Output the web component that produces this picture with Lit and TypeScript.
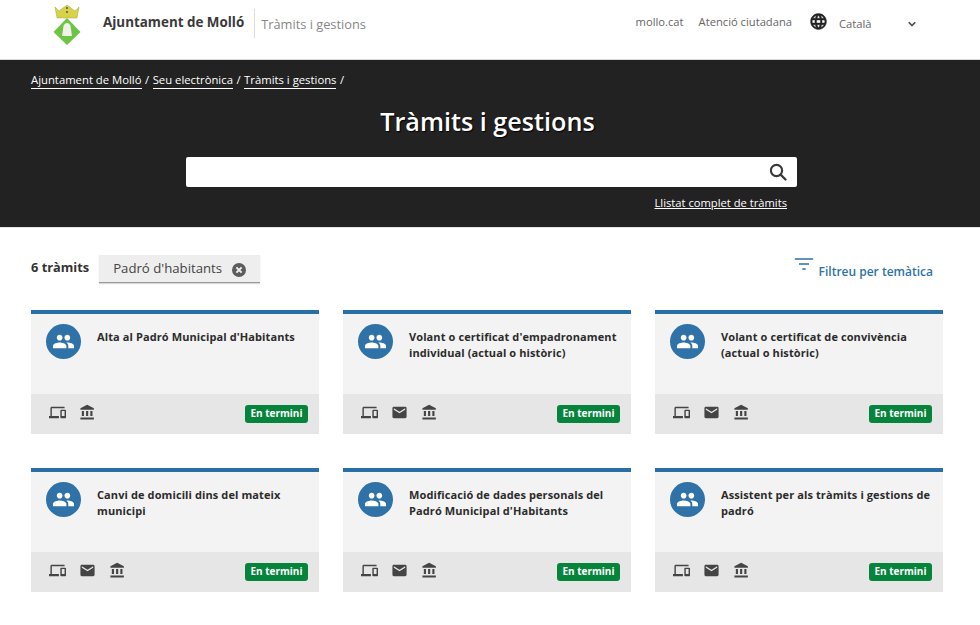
import { LitElement, css, html, svg } from 'lit'
import { customElement } from 'lit/decorators.js'

const icon = (d: unknown, size: number, cls = '') =>
  html`<svg class=${cls} width=${size} height=${size} viewBox="0 0 24 24" fill="currentColor">${d}</svg>`

const people = svg`<path d="M16 11c1.66 0 2.99-1.34 2.99-3S17.66 5 16 5s-3 1.34-3 3 1.34 3 3 3zm-8 0c1.66 0 2.99-1.34 2.99-3S9.66 5 8 5 5 6.34 5 8s1.34 3 3 3zm0 2c-2.33 0-7 1.17-7 3.5V19h14v-2.5C15 14.17 10.33 13 8 13zm8 0c-.29 0-.62.02-.97.05 1.16.84 1.97 1.97 1.97 3.45V19h6v-2.5c0-2.33-4.67-3.5-7-3.5z"/>`
const devices = svg`<path d="M4 6h18V4H4c-1.1 0-2 .9-2 2v11H0v3h14v-3H4V6zm19 2h-6c-.55 0-1 .45-1 1v10c0 .55.45 1 1 1h6c.55 0 1-.45 1-1V9c0-.55-.45-1-1-1zm-1 9h-4v-7h4v7z"/>`
const mail = svg`<path d="M20 4H4c-1.1 0-2 .9-2 2v12c0 1.1.9 2 2 2h16c1.1 0 2-.9 2-2V6c0-1.1-.9-2-2-2zm0 4-8 5-8-5V6l8 5 8-5v2z"/>`
const bank = svg`<path d="M4 10v7h3v-7H4zm6 0v7h3v-7h-3zM2 22h19v-3H2v3zm14-12v7h3v-7h-3zm-4.500-9L2 6v2h19V6l-9.500-5z"/>`
const globe = svg`<path stroke="currentColor" stroke-width=".6" d="M11.990 2C6.470 2 2 6.480 2 12s4.470 10 9.990 10C17.520 22 22 17.520 22 12S17.520 2 11.990 2zm6.930 6h-2.950c-.32-1.250-.78-2.450-1.380-3.560 1.840.63 3.370 1.910 4.330 3.560zM12 4.040c.83 1.200 1.480 2.530 1.910 3.960h-3.820c.43-1.430 1.080-2.760 1.910-3.960zM4.260 14C4.100 13.360 4 12.690 4 12s.1-1.360.26-2h3.380c-.08.660-.14 1.320-.14 2s.06 1.340.14 2H4.260zm.82 2h2.950c.32 1.250.78 2.450 1.380 3.560-1.840-.63-3.370-1.900-4.330-3.560zm2.950-8H5.080c.96-1.660 2.490-2.930 4.330-3.560C8.810 5.550 8.350 6.750 8.030 8zM12 19.960c-.83-1.200-1.480-2.530-1.910-3.960h3.820c-.43 1.430-1.080 2.760-1.910 3.960zM14.340 14H9.660c-.09-.66-.16-1.320-.16-2s.07-1.350.16-2h4.680c.09.650.16 1.320.16 2s-.07 1.340-.16 2zm.25 5.560c.6-1.110 1.060-2.310 1.380-3.560h2.950c-.96 1.650-2.490 2.930-4.330 3.560zM16.360 14c.08-.66.14-1.320.14-2s-.06-1.340-.14-2h3.380c.16.640.26 1.310.26 2s-.1 1.360-.26 2h-3.380z"/>`
const search = svg`<circle cx="10" cy="10" r="7.500" fill="none" stroke="currentColor" stroke-width="2.800"/><path d="M15.500 15.500L22 22" fill="none" stroke="currentColor" stroke-width="3" stroke-linecap="round"/>`
const cancel = svg`<circle cx="12" cy="12" r="12"/><path d="M7.500 7.500l9 9M16.500 7.500l-9 9" fill="none" stroke="#eee" stroke-width="3.600"/>`
const chevron = svg`<path stroke="currentColor" stroke-width=".8" d="M16.590 8.590 12 13.170 7.410 8.590 6 10l6 6 6-6z"/>`
const filter = svg`<path d="M1 5h22v2H1zM6 11h12v2H6zM10 17h4v2h-4z"/>`

type Channel = 'devices' | 'mail' | 'bank'
const channelIcons = { devices, mail, bank }

const tramits: { title: string; channels: Channel[] }[] = [
  { title: "Alta al Padró Municipal d'Habitants", channels: ['devices', 'bank'] },
  { title: "Volant o certificat d'empadronament individual (actual o històric)", channels: ['devices', 'mail', 'bank'] },
  { title: 'Volant o certificat de convivència (actual o històric)', channels: ['devices', 'mail', 'bank'] },
  { title: 'Canvi de domicili dins del mateix municipi', channels: ['devices', 'mail', 'bank'] },
  { title: "Modificació de dades personals del Padró Municipal d'Habitants", channels: ['devices', 'mail', 'bank'] },
  { title: 'Assistent per als tràmits i gestions de padró', channels: ['devices', 'mail', 'bank'] },
]

@customElement('app-root')
export class AppRoot extends LitElement {
  static styles = css`
    :host {
      display: block;
      width: 980px;
      height: 625px;
      overflow: hidden;
      background: #fff;
      font-family: "Open Sans", "Liberation Sans", sans-serif;
      color: #333;
    }
    a { color: inherit; }
    svg { display: block; flex: none; }

    .top {
      height: 59px;
      border-bottom: 1px solid #d9d9d9;
      display: flex;
      align-items: flex-start;
      padding-left: 51px;
      padding-right: 61px;
    }
    .logo { margin-top: 3px; }
    .brand {
      margin: 13px 0 0 20px;
      font-size: 13.400px;
      line-height: 18px;
      font-weight: 700;
      color: #3a3a3a;
    }
    .section {
      margin: 9px 0 0 10px;
      height: 29px;
      padding-left: 6px;
      border-left: 1px solid #ddd;
      font-size: 12.800px;
      line-height: 30px;
      color: #888;
    }
    .top-links {
      margin-left: auto;
      display: flex;
      align-items: flex-start;
      font-size: 11.200px;
      line-height: 16px;
      color: #666;
    }
    .top-links span { margin-top: 14px; }
    .top-links .atc { margin-left: 15px; }
    .top-links svg.globe { margin: 12px 0 0 17px; color: #222; }
    .top-links .lang { margin: 16px 0 0 11px; width: 66px; }
    .top-links svg.chev { margin: 17px 0 0 0; color: #333; }

    .hero {
      height: 168px;
      background: #222;
      color: #fff;
      padding: 12px 31px 0;
      box-sizing: border-box;
      display: flex;
      flex-direction: column;
      border-bottom: 1px solid #e6e6e6;
    }
    .crumbs { display: flex; gap: 3.500px; font-size: 11.300px; line-height: 16px; }
    .crumbs a { text-decoration: none; border-bottom: 1px solid #fff; }
    h1 {
      margin: 14px 0 0;
      font-size: 25.200px;
      line-height: 36px;
      font-weight: 600;
      text-align: center;
      padding-right: 5px;
      text-shadow: 1px 1px 1px #000;
    }
    .search {
      margin: 18px 0 0 155px;
      width: 611px;
      height: 30px;
      background: #fff;
      border-radius: 2px;
      color: #3a3a3a;
      display: flex;
      align-items: center;
      justify-content: flex-end;
      padding-right: 10px;
      box-sizing: border-box;
    }
    .all {
      align-self: flex-end;
      margin: 8px 162px 0 0;
      font-size: 11.200px;
      line-height: 16px;
      text-decoration: underline;
    }

    .results {
      padding: 27px 37px 0 31px;
      display: flex;
      flex-direction: column;
    }
    .bar { display: flex; align-items: flex-start; height: 55px; }
    .count {
      font-size: 12.800px;
      line-height: 24px;
      font-weight: 700;
      color: #333;
    }
    .chip {
      margin-left: 10px;
      width: 161px;
      height: 28px;
      box-sizing: border-box;
      display: flex;
      align-items: center;
      padding: 0 0 2px 14px;
      background: #eee;
      border-bottom: 1px solid #999;
      box-shadow: 0 1px 1px rgba(0, 0, 0, 0.15);
      font-size: 13.200px;
      color: #444;
    }
    .chip svg { margin: 4px 0 0 10px; color: #5c5c5c; }
    .filter {
      margin-left: auto;
      display: flex;
      align-items: flex-start;
      color: #2e72a8;
      font-size: 12px;
      font-weight: 600;
      line-height: 16px;
      margin-right: 10px;
    }
    .filter svg { margin: -1px 5px 0 0; }
    .filter span { margin-top: 9px; }

    .grid {
      display: grid;
      grid-template-columns: repeat(3, 288px);
      column-gap: 24px;
      row-gap: 34px;
    }
    .card {
      height: 124px;
      box-sizing: border-box;
      display: flex;
      flex-direction: column;
      background: #f3f3f3;
      border-top: 4px solid #2a6ea6;
    }
    .body { flex: 1; display: flex; padding: 10px 12px 0 15px; gap: 16px; }
    .badge {
      flex: none;
      width: 35px;
      height: 35px;
      border-radius: 50%;
      background: #2f72a8;
      color: #fff;
      display: flex;
      align-items: center;
      justify-content: center;
    }
    .title {
      font-size: 11px;
      line-height: 16px;
      font-weight: 700;
      color: #2b2b2b;
      letter-spacing: 0.1px;
      margin-top: 5px;
    }
    .foot {
      height: 40px;
      background: #e6e6e6;
      display: flex;
      align-items: center;
      padding: 0 11px 0 18px;
    }
    .channels { display: flex; gap: 13px; color: #444; margin-top: -4px; }
    .status {
      margin-left: auto;
      background: #06843c;
      color: #fff;
      border-radius: 3px;
      font-size: 10px;
      font-weight: 700;
      line-height: 17px;
      padding: 0 5.500px 1px;
    }
  `

  render() {
    return html`
      <div class="top">
        <svg class="logo" width="32" height="44" viewBox="0 0 32 44">
          <path d="M4 4l4 4 4-3 4-3 4 3 4 3 4-4-2 11H6z" fill="#d8d24a" stroke="#a8a23a" stroke-width=".5"/>
          <circle cx="16" cy="5" r="1" fill="#555"/>
          <circle cx="16" cy="9" r="1" fill="#555"/>
          <path d="M16 15L29.500 29 16 42 2.500 29z" fill="#6cc644"/>
          <path d="M11 33l1.500-10c.5-2 2-3 3.500-3s3 1 3.500 3L21 33z" fill="#f1f1ea"/>
        </svg>
        <div class="brand">Ajuntament de Molló</div>
        <div class="section">Tràmits i gestions</div>
        <div class="top-links">
          <span>mollo.cat</span>
          <span class="atc">Atenció ciutadana</span>
          ${icon(globe, 19, 'globe')}
          <span class="lang">Català</span>
          ${icon(chevron, 14, 'chev')}
        </div>
      </div>

      <div class="hero">
        <div class="crumbs">
          <a href="#">Ajuntament de Molló</a><span>/</span>
          <a href="#">Seu electrònica</a><span>/</span>
          <a href="#">Tràmits i gestions</a><span>/</span>
        </div>
        <h1>Tràmits i gestions</h1>
        <div class="search">${icon(search, 18)}</div>
        <a class="all" href="#">Llistat complet de tràmits</a>
      </div>

      <div class="results">
        <div class="bar">
          <div class="count">6 tràmits</div>
          <div class="chip">Padró d'habitants ${icon(cancel, 14)}</div>
          <div class="filter">${icon(filter, 20)}<span>Filtreu per temàtica</span></div>
        </div>
        <div class="grid">
          ${tramits.map(
            (t) => html`
              <div class="card">
                <div class="body">
                  <div class="badge">${icon(people, 23)}</div>
                  <div class="title">${t.title}</div>
                </div>
                <div class="foot">
                  <div class="channels">${t.channels.map((c) => icon(channelIcons[c], 17))}</div>
                  <div class="status">En termini</div>
                </div>
              </div>
            `,
          )}
        </div>
      </div>
    `
  }
}
